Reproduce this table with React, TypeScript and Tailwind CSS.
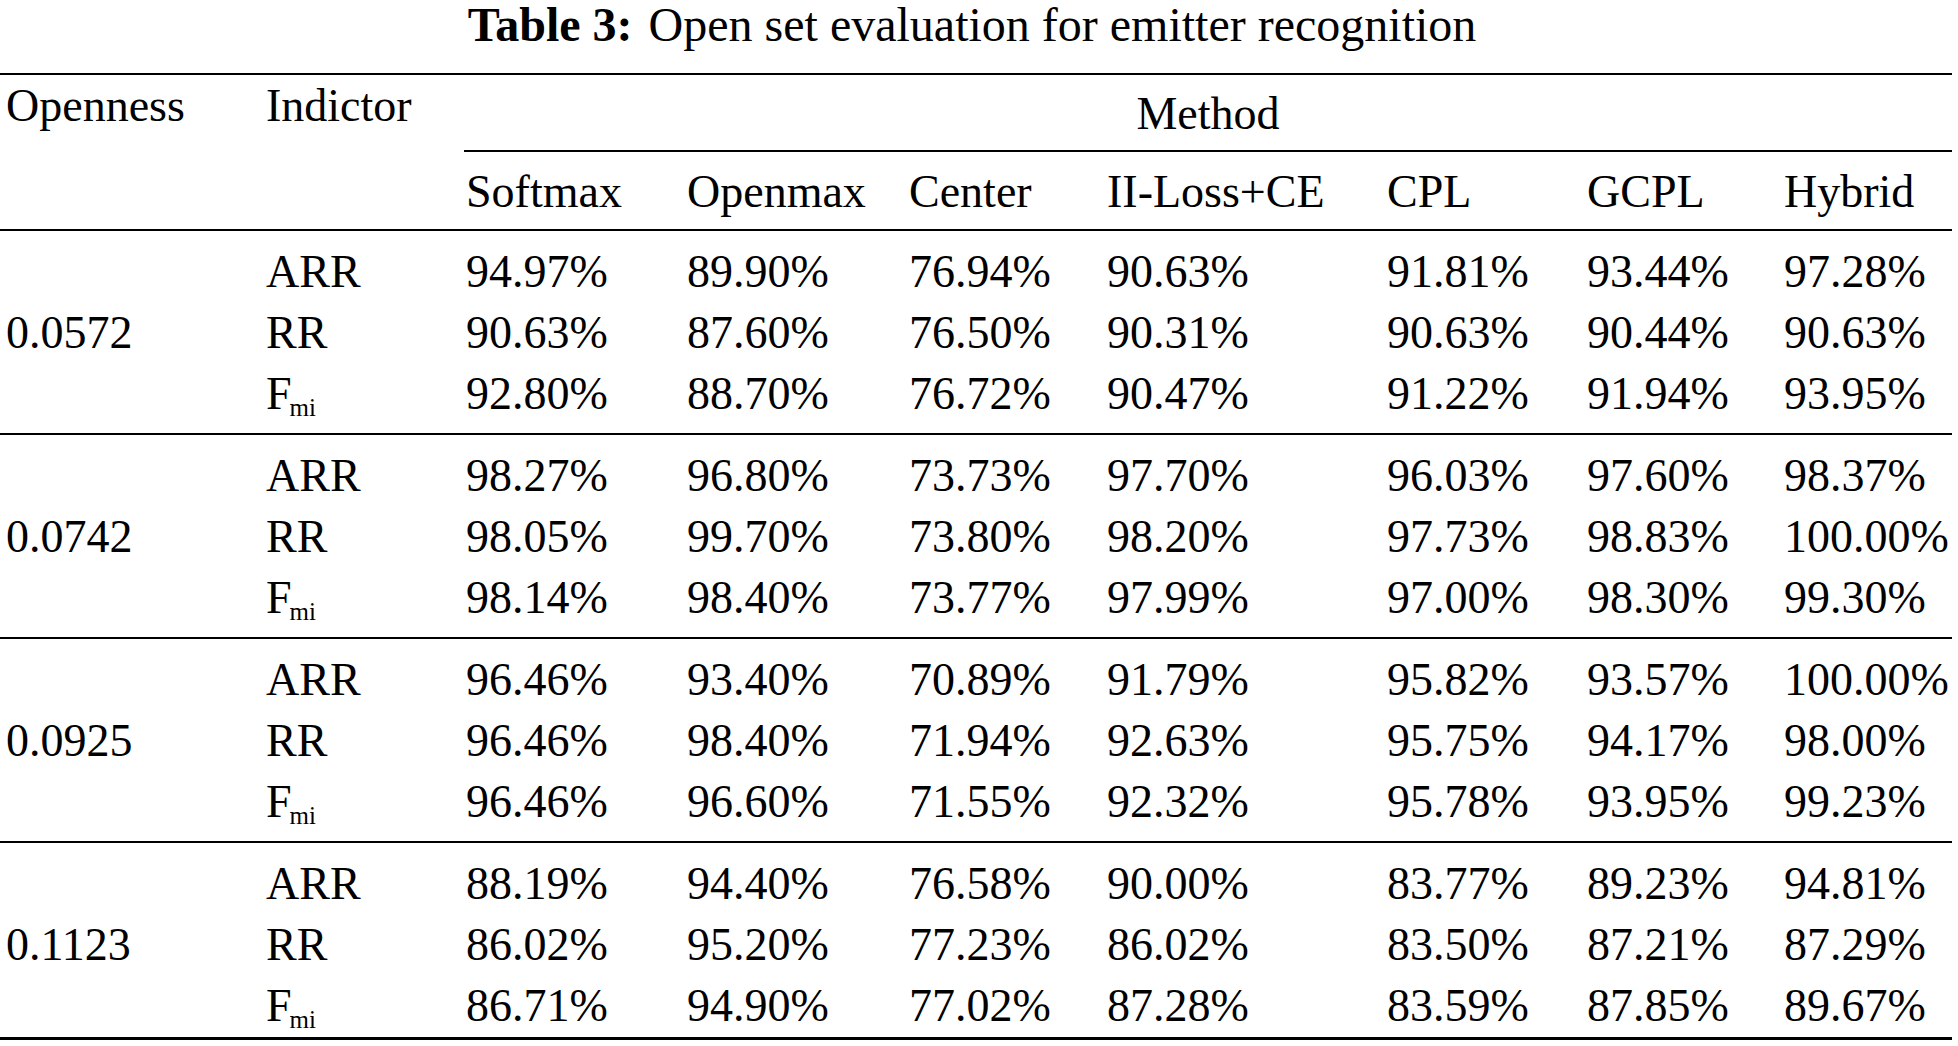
import React from 'react';

type Row = { ind: string; vals: string[] };
type Group = { openness: string; rows: Row[] };

const methods = ['Softmax', 'Openmax', 'Center', 'II-Loss+CE', 'CPL', 'GCPL', 'Hybrid'];

const groups: Group[] = [
  {
    openness: '0.0572',
    rows: [
      { ind: 'ARR', vals: ['94.97%', '89.90%', '76.94%', '90.63%', '91.81%', '93.44%', '97.28%'] },
      { ind: 'RR', vals: ['90.63%', '87.60%', '76.50%', '90.31%', '90.63%', '90.44%', '90.63%'] },
      { ind: 'F', vals: ['92.80%', '88.70%', '76.72%', '90.47%', '91.22%', '91.94%', '93.95%'] },
    ],
  },
  {
    openness: '0.0742',
    rows: [
      { ind: 'ARR', vals: ['98.27%', '96.80%', '73.73%', '97.70%', '96.03%', '97.60%', '98.37%'] },
      { ind: 'RR', vals: ['98.05%', '99.70%', '73.80%', '98.20%', '97.73%', '98.83%', '100.00%'] },
      { ind: 'F', vals: ['98.14%', '98.40%', '73.77%', '97.99%', '97.00%', '98.30%', '99.30%'] },
    ],
  },
  {
    openness: '0.0925',
    rows: [
      { ind: 'ARR', vals: ['96.46%', '93.40%', '70.89%', '91.79%', '95.82%', '93.57%', '100.00%'] },
      { ind: 'RR', vals: ['96.46%', '98.40%', '71.94%', '92.63%', '95.75%', '94.17%', '98.00%'] },
      { ind: 'F', vals: ['96.46%', '96.60%', '71.55%', '92.32%', '95.78%', '93.95%', '99.23%'] },
    ],
  },
  {
    openness: '0.1123',
    rows: [
      { ind: 'ARR', vals: ['88.19%', '94.40%', '76.58%', '90.00%', '83.77%', '89.23%', '94.81%'] },
      { ind: 'RR', vals: ['86.02%', '95.20%', '77.23%', '86.02%', '83.50%', '87.21%', '87.29%'] },
      { ind: 'F', vals: ['86.71%', '94.90%', '77.02%', '87.28%', '83.59%', '87.85%', '89.67%'] },
    ],
  },
];

const cols = 'grid grid-cols-[266px_200px_221px_222px_198px_280px_200px_197px_168px]';

const Indicator = ({ ind }: { ind: string }) =>
  ind === 'F' ? (
    <span>
      F<sub className="text-[25px] -bottom-[7px] -ml-[2px]">mi</sub>
    </span>
  ) : (
    <span>{ind}</span>
  );

export default function App() {
  return (
    <div className="w-[1958px] h-[1046px] bg-white text-black font-['Liberation_Serif','Times_New_Roman',serif] overflow-hidden">
      <div className="w-[1952px]">
        {/* caption */}
        <div className="h-[73px] pr-[8px] text-center text-[48px] leading-[50px]">
          <span className="font-bold">Table 3:</span>
          <span className="ml-[4px]"> Open set evaluation for emitter recognition</span>
        </div>

        {/* header */}
        <div className={`${cols} border-t-2 border-black text-[46px] leading-[61px]`}>
          <div className="row-span-2 pl-[6px]">Openness</div>
          <div className="row-span-2">Indictor</div>
          <div className="col-span-7 -ml-[2px] h-[77px] flex items-center justify-center border-b-2 border-black pt-[2px]">
            Method
          </div>
          {methods.map((m) => (
            <div key={m} className="h-[77px] flex items-center pt-[2px]">
              {m}
            </div>
          ))}
        </div>

        {/* body */}
        {groups.map((g, gi) => {
          const last = gi === groups.length - 1;
          return (
            <div
              key={g.openness}
              className={`${cols} border-t-2 border-black pt-[10px] text-[46px] leading-[61px] ${
                last ? 'pb-[1px] border-b-[3px]' : 'pb-[9px]'
              }`}
            >
              <div className="row-span-3 flex items-center pl-[6px]">{g.openness}</div>
              {g.rows.map((r) => (
                <React.Fragment key={r.ind}>
                  <div>
                    <Indicator ind={r.ind} />
                  </div>
                  {r.vals.map((v, i) => (
                    <div key={i} className="whitespace-nowrap">
                      {v}
                    </div>
                  ))}
                </React.Fragment>
              ))}
            </div>
          );
        })}
      </div>
    </div>
  );
}
